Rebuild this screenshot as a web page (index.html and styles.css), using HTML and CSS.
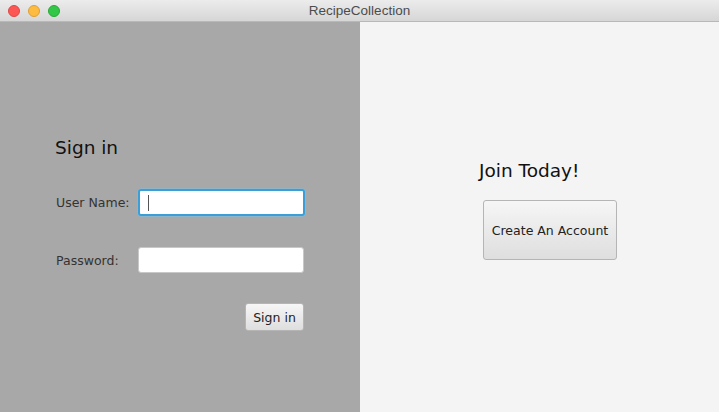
FILE: index.html
```html
<!DOCTYPE html>
<html>
<head>
<meta charset="utf-8">
<link rel="stylesheet" href="styles.css">
</head>
<body>
<div class="window">
  <div class="titlebar">
    <div class="lights">
      <span class="light red"></span>
      <span class="light yellow"></span>
      <span class="light green"></span>
    </div>
    <div class="title">RecipeCollection</div>
  </div>
  <div class="main">
    <div class="left">
      <h1 class="heading">Sign in</h1>
      <div class="row row-user">
        <label class="label">User Name:</label>
        <div class="input focused"><span class="caret"></span></div>
      </div>
      <div class="row row-pass">
        <label class="label">Password:</label>
        <div class="input"></div>
      </div>
      <div class="actions">
        <button class="btn btn-sign">Sign in</button>
      </div>
    </div>
    <div class="right">
      <h2 class="join">Join Today!</h2>
      <button class="btn btn-create">Create An Account</button>
    </div>
  </div>
</div>
</body>
</html>
```
FILE: styles.css
```css
* { box-sizing: border-box; }
html, body { margin: 0; padding: 0; }
body { width: 719px; height: 412px; overflow: hidden; font-family: "DejaVu Sans", Verdana, sans-serif; }
.window { width: 719px; height: 412px; display: flex; flex-direction: column; }
.titlebar {
  height: 22px; flex: 0 0 22px; position: relative;
  background: linear-gradient(#ececec, #d6d6d6);
  border-bottom: 1px solid #b8b8b8;
  display: flex; align-items: center; justify-content: center;
}
.lights { position: absolute; left: 8px; top: 5px; display: flex; gap: 8px; }
.light { width: 12px; height: 12px; border-radius: 50%; display: block; }
.red { background: #fc5753; border: 0.5px solid #df4744; }
.yellow { background: #fdbc40; border: 0.5px solid #de9f34; }
.green { background: #33c748; border: 0.5px solid #27aa35; }
.title { font-family: "Liberation Sans", Arial, sans-serif; font-size: 13.5px; color: #4c4c4c; }
.main { flex: 1; display: flex; }
.left { width: 360px; background: #a8a8a8; padding: 114px 0 0 55px; }
.right { flex: 1; background: #f4f4f4; padding: 137px 0 0 119px; }
.heading { margin: 0; font-weight: normal; font-size: 18.5px; color: #111; line-height: 24px; height: 24px; }
.row { display: flex; align-items: center; }
.row-user { margin-top: 29px; }
.row-pass { margin-top: 31px; }
.label { width: 83px; padding-left: 1px; font-size: 12.5px; color: #333; }
.input { width: 166px; height: 26px; background: #fff; border: 1px solid #c8c8c8; border-radius: 3px; position: relative; }
.input.focused { height: 27px; width: 167px; border: 2px solid #3b9fd7; box-shadow: 0 0 0 0.5px #7cc0e6; }
.caret { position: absolute; left: 8px; top: 4px; width: 1px; height: 16px; background: #555; }
.actions { display: flex; justify-content: flex-end; width: 249px; margin-top: 30px; }
.btn {
  font-family: "DejaVu Sans", Verdana, sans-serif; color: #222;
  background: linear-gradient(#f6f6f6, #dedede);
  border: 1px solid #b5b5b5; border-radius: 3px; padding: 0;
}
.btn-sign { width: 59px; height: 28px; font-size: 12.5px; }
.join { margin: 0; font-weight: normal; font-size: 18.5px; color: #111; line-height: 24px; }
.btn-create { display: block; margin: 17px 0 0 4px; width: 134px; height: 60px; font-size: 12.5px; }
```
